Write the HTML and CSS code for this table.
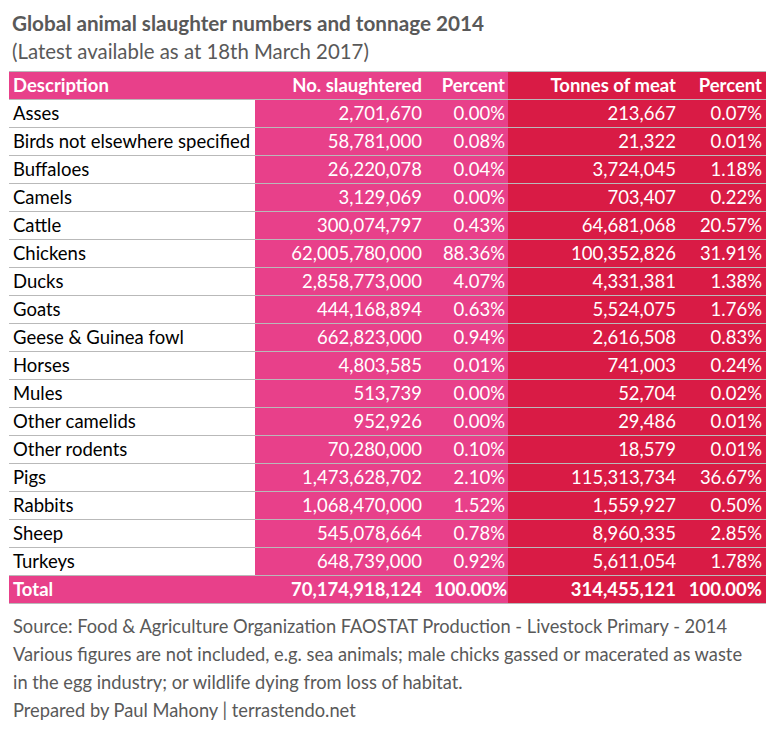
FILE: index.html
```html
<!DOCTYPE html>
<html>
<head>
<meta charset="utf-8">
<link rel="stylesheet" href="styles.css">
</head>
<body>
<div class="page">
  <h1 class="title">Global animal slaughter numbers and tonnage 2014</h1>
  <p class="subtitle">(Latest available as at 18th March 2017)</p>
  <table class="data">
    <colgroup>
      <col class="c-desc"><col class="c-num"><col class="c-pct"><col class="c-ton"><col class="c-pct2">
    </colgroup>
    <thead>
      <tr><th class="desc">Description</th><th class="pink">No. slaughtered</th><th class="pink p3">Percent</th><th class="red">Tonnes of meat</th><th class="red p5">Percent</th></tr>
    </thead>
    <tbody>
      <tr><td class="desc">Asses</td><td class="pink">2,701,670</td><td class="pink p3">0.00%</td><td class="red">213,667</td><td class="red p5">0.07%</td></tr>
      <tr><td class="desc">Birds not elsewhere specified</td><td class="pink">58,781,000</td><td class="pink p3">0.08%</td><td class="red">21,322</td><td class="red p5">0.01%</td></tr>
      <tr><td class="desc">Buffaloes</td><td class="pink">26,220,078</td><td class="pink p3">0.04%</td><td class="red">3,724,045</td><td class="red p5">1.18%</td></tr>
      <tr><td class="desc">Camels</td><td class="pink">3,129,069</td><td class="pink p3">0.00%</td><td class="red">703,407</td><td class="red p5">0.22%</td></tr>
      <tr><td class="desc">Cattle</td><td class="pink">300,074,797</td><td class="pink p3">0.43%</td><td class="red">64,681,068</td><td class="red p5">20.57%</td></tr>
      <tr><td class="desc">Chickens</td><td class="pink">62,005,780,000</td><td class="pink p3">88.36%</td><td class="red">100,352,826</td><td class="red p5">31.91%</td></tr>
      <tr><td class="desc">Ducks</td><td class="pink">2,858,773,000</td><td class="pink p3">4.07%</td><td class="red">4,331,381</td><td class="red p5">1.38%</td></tr>
      <tr><td class="desc">Goats</td><td class="pink">444,168,894</td><td class="pink p3">0.63%</td><td class="red">5,524,075</td><td class="red p5">1.76%</td></tr>
      <tr><td class="desc">Geese &amp; Guinea fowl</td><td class="pink">662,823,000</td><td class="pink p3">0.94%</td><td class="red">2,616,508</td><td class="red p5">0.83%</td></tr>
      <tr><td class="desc">Horses</td><td class="pink">4,803,585</td><td class="pink p3">0.01%</td><td class="red">741,003</td><td class="red p5">0.24%</td></tr>
      <tr><td class="desc">Mules</td><td class="pink">513,739</td><td class="pink p3">0.00%</td><td class="red">52,704</td><td class="red p5">0.02%</td></tr>
      <tr><td class="desc">Other camelids</td><td class="pink">952,926</td><td class="pink p3">0.00%</td><td class="red">29,486</td><td class="red p5">0.01%</td></tr>
      <tr><td class="desc">Other rodents</td><td class="pink">70,280,000</td><td class="pink p3">0.10%</td><td class="red">18,579</td><td class="red p5">0.01%</td></tr>
      <tr><td class="desc">Pigs</td><td class="pink">1,473,628,702</td><td class="pink p3">2.10%</td><td class="red">115,313,734</td><td class="red p5">36.67%</td></tr>
      <tr><td class="desc">Rabbits</td><td class="pink">1,068,470,000</td><td class="pink p3">1.52%</td><td class="red">1,559,927</td><td class="red p5">0.50%</td></tr>
      <tr><td class="desc">Sheep</td><td class="pink">545,078,664</td><td class="pink p3">0.78%</td><td class="red">8,960,335</td><td class="red p5">2.85%</td></tr>
      <tr><td class="desc">Turkeys</td><td class="pink">648,739,000</td><td class="pink p3">0.92%</td><td class="red">5,611,054</td><td class="red p5">1.78%</td></tr>
    </tbody>
    <tfoot>
      <tr><th class="desc">Total</th><th class="pink">70,174,918,124</th><th class="pink p3">100.00%</th><th class="red">314,455,121</th><th class="red p5">100.00%</th></tr>
    </tfoot>
  </table>
  <div class="notes">
    <p>Source: Food &amp; Agriculture Organization FAOSTAT Production - Livestock Primary - 2014</p>
    <p>Various figures are not included, e.g. sea animals; male chicks gassed or macerated as waste<br>in the egg industry; or wildlife dying from loss of habitat.</p>
    <p>Prepared by Paul Mahony | terrastendo.net</p>
  </div>
</div>
</body>
</html>
```

FILE: styles.css
```css
html, body {
  margin: 0;
  padding: 0;
  background: #ffffff;
}

.page {
  padding: 10px 0 0 9px;
  width: 757px;
  font-family: "Lato", "Liberation Sans", sans-serif;
}

.title {
  margin: 0;
  padding-left: 3px;
  font-size: 20.7px;
  font-weight: 700;
  line-height: 27px;
  color: #595959;
}

.subtitle {
  margin: 0 0 6px 0;
  padding-left: 3px;
  font-size: 20.4px;
  font-weight: 400;
  line-height: 28px;
  color: #595959;
}

.data {
  border-collapse: collapse;
  table-layout: fixed;
  width: 757px;
  font-size: 18.5px;
}

.c-desc { width: 246px; }
.c-num { width: 175px; }
.c-pct { width: 78px; }
.c-ton { width: 175px; }
.c-pct2 { width: 83px; }

.data th,
.data td {
  height: 27px;
  padding: 0 8px 0 4px;
  border-top: 1px solid #b9b9b9;
  border-bottom: 1px solid #b9b9b9;
  white-space: nowrap;
  text-align: right;
  line-height: 27px;
  color: #ffffff;
  font-weight: 400;
}

.data th {
  font-weight: 700;
}

.data .desc {
  text-align: left;
  color: #000000;
  background: #ffffff;
}

.data th.desc {
  color: #ffffff;
  background: #e8408a;
}

.data .pink { background: #e8408a; }
.data .red { background: #d91b45; padding-right: 7px; }
.data .p3 { padding-right: 3px; }
.data .p5 { padding-right: 4px; }

.notes {
  padding: 8px 0 0 4px;
  color: #595959;
  font-size: 18.3px;
  line-height: 28px;
}

.notes p {
  margin: 0;
}
```
